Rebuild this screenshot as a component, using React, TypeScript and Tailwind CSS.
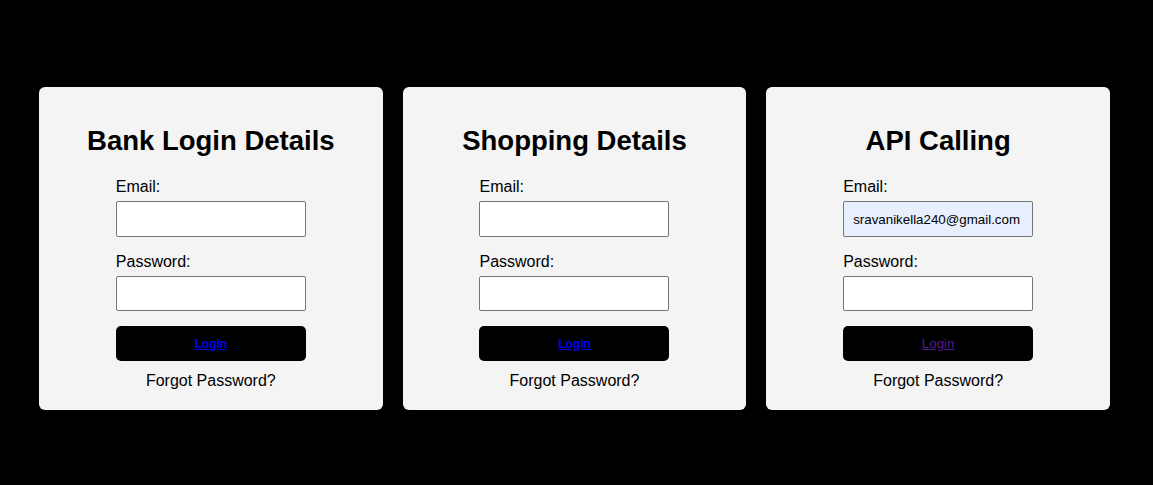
import React from "react";

type Card = {
  title: string;
  email?: string;
  visited?: boolean;
};

const cards: Card[] = [
  { title: "Bank Login Details" },
  { title: "Shopping Details" },
  { title: "API Calling", email: "sravanikella240@gmail.com", visited: true },
];

function LoginCard({ card }: { card: Card }) {
  return (
    <div className="w-[343.67px] h-[323px] shrink-0 rounded-[6px] bg-[#f4f4f4] px-5 pt-5">
      <h2 className="mt-[18px] text-center text-[27.5px] leading-[31px] font-bold text-black">
        {card.title}
      </h2>
      <div className="mx-auto mt-[21px] w-[190px]">
        <label className="block text-[16px] leading-[19px] text-black">Email:</label>
        <input
          type="email"
          defaultValue={card.email ?? ""}
          className={
            "mt-[5px] block h-[36px] w-[190px] rounded-[2px] border border-[#767676] px-[9px] text-[13.33px] text-black outline-none " +
            (card.email ? "bg-[#e8f0fe]" : "bg-white")
          }
        />
        <label className="mt-[15px] block text-[16px] leading-[19px] text-black">Password:</label>
        <input
          type="password"
          className="mt-[5px] block h-[35px] w-[190px] rounded-[2px] border border-[#767676] bg-white outline-none"
        />
        <button className="mt-[15px] flex h-[35px] w-[190px] items-center justify-center rounded-[5px] bg-black">
          <a
            href="#"
            className={
              "underline " +
              (card.visited
                ? "text-[13.33px] font-normal text-[#551a8b]"
                : "text-[12px] font-bold text-[#0000ee]")
            }
          >
            Login
          </a>
        </button>
      </div>
      <p className="mt-[10px] text-center text-[16px] leading-[19px] text-black">Forgot Password?</p>
    </div>
  );
}

export default function App() {
  return (
    <div
      className="h-[485px] w-full bg-black pt-[87px] pl-[39px]"
      style={{ fontFamily: '"Liberation Sans", Arial, sans-serif' }}
    >
      <div className="flex gap-[20px]">
        {cards.map((c) => (
          <LoginCard key={c.title} card={c} />
        ))}
      </div>
    </div>
  );
}
